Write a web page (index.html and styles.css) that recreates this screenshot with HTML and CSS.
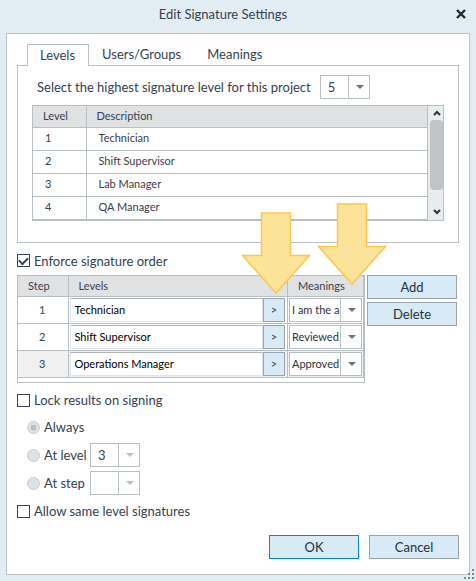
FILE: index.html
```html
<!DOCTYPE html>
<html lang="en">
<head>
  <meta charset="UTF-8">
  <meta name="viewport" content="width=device-width, initial-scale=1.0">
  <title>Edit Signature Settings</title>
  <link rel="stylesheet" href="styles.css">
</head>
<body>
  <header class="titlebar">
    <h1>Edit Signature Settings</h1>
    <button class="close" type="button" aria-label="Close">
      <svg width="10" height="10" viewBox="0 0 10 10"><path d="M1 1L9 9M9 1L1 9" stroke="#1f2937" stroke-width="2.4"/></svg>
    </button>
  </header>

  <form class="panel">
    <div class="tabs" role="tablist">
      <button class="tab active" type="button" role="tab" aria-selected="true">Levels</button>
      <button class="tab" type="button" role="tab" aria-selected="false">Users/Groups</button>
      <button class="tab" type="button" role="tab" aria-selected="false">Meanings</button>
    </div>

    <section class="tab-page">
      <div class="highest">
        <label for="highest">Select the highest signature level for this project</label>
        <span class="select"><select id="highest"><option>5</option></select></span>
      </div>
      <div class="grid">
        <table class="levels">
          <thead>
            <tr><th class="col-level">Level</th><th>Description</th></tr>
          </thead>
          <tbody>
            <tr><td>1</td><td>Technician</td></tr>
            <tr><td>2</td><td>Shift Supervisor</td></tr>
            <tr><td>3</td><td>Lab Manager</td></tr>
            <tr><td>4</td><td>QA Manager</td></tr>
          </tbody>
        </table>
        <div class="scrollbar">
          <svg width="8" height="6" viewBox="0 0 8 6"><path d="M1 5L4 2L7 5" fill="none" stroke="#333" stroke-width="2"/></svg>
          <div class="thumb"></div>
          <svg width="8" height="6" viewBox="0 0 8 6"><path d="M1 1L4 4L7 1" fill="none" stroke="#333" stroke-width="2"/></svg>
        </div>
      </div>
    </section>

    <label class="check enforce"><input type="checkbox" checked>Enforce signature order</label>

    <div class="order">
      <div class="steps-box">
        <table class="steps">
          <thead>
            <tr>
              <th class="col-step">Step</th>
              <th class="col-levels">Levels
                <svg class="arrow arrow-levels" width="70" height="83" viewBox="0 0 70 83"><path d="M20.500 1H49.500V43.500H68.500L35 81L1.500 43.500H20.500Z" fill="#fce39a" stroke="#fdc74f" stroke-width="1.500"/></svg>
              </th>
              <th class="col-meanings">Meanings
                <svg class="arrow arrow-meanings" width="70" height="83" viewBox="0 0 70 83"><path d="M20.500 1H49.500V43.500H68.500L35 81L1.500 43.500H20.500Z" fill="#fce39a" stroke="#fdc74f" stroke-width="1.500"/></svg>
              </th>
            </tr>
          </thead>
          <tbody>
            <tr>
              <td>1</td>
              <td><div class="picker"><input type="text" value="Technician" aria-label="Level for step 1"><button type="button">&gt;</button></div></td>
              <td><span class="select"><select aria-label="Meaning for step 1"><option>I am the author</option></select></span></td>
            </tr>
            <tr>
              <td>2</td>
              <td><div class="picker"><input type="text" value="Shift Supervisor" aria-label="Level for step 2"><button type="button">&gt;</button></div></td>
              <td><span class="select"><select aria-label="Meaning for step 2"><option>Reviewed</option></select></span></td>
            </tr>
            <tr class="current">
              <td>3</td>
              <td><div class="picker"><input type="text" value="Operations Manager" aria-label="Level for step 3"><button type="button">&gt;</button></div></td>
              <td><span class="select"><select aria-label="Meaning for step 3"><option>Approved</option></select></span></td>
            </tr>
          </tbody>
        </table>
      </div>
      <div class="order-buttons">
        <button class="btn" type="button">Add</button>
        <button class="btn" type="button">Delete</button>
      </div>
    </div>

    <label class="check lock"><input type="checkbox">Lock results on signing</label>

    <div class="lock-options">
      <div class="option">
        <label class="radio"><input type="radio" name="lock" checked disabled>Always</label>
      </div>
      <div class="option">
        <label class="radio"><input type="radio" name="lock" disabled>At level</label>
        <span class="select disabled"><select aria-label="Level" disabled><option>3</option></select></span>
      </div>
      <div class="option">
        <label class="radio"><input type="radio" name="lock" disabled>At step</label>
        <span class="select disabled"><select aria-label="Step" disabled><option></option></select></span>
      </div>
    </div>

    <label class="check"><input type="checkbox">Allow same level signatures</label>

    <footer class="actions">
      <button class="btn primary" type="button">OK</button>
      <button class="btn" type="button">Cancel</button>
    </footer>
  </form>

  <svg class="grip" width="10" height="10" viewBox="0 0 10 10" fill="#7c8494"><path d="M8 0h2v2h-2zM4 4h2v2h-2zM8 4h2v2h-2zM0 8h2v2h-2zM4 8h2v2h-2zM8 8h2v2h-2z"/></svg>
</body>
</html>
```
FILE: styles.css
```css
* { box-sizing: border-box; }
body {
  margin: 0;
  min-height: 100vh;
  padding: 0 6px 6px;
  display: flex;
  flex-direction: column;
  position: relative;
  background: #e2edf3;
  color: #364152;
  font-family: Lato, Carlito, sans-serif;
  font-size: 13px;
  line-height: 16px;
}
button, input, select {
  font: inherit;
  color: inherit;
  margin: 0;
  border-radius: 0;
}

/* title bar */
.titlebar {
  height: 33px;
  padding-bottom: 6px;
  display: grid;
  grid-template-columns: 20px 1fr 20px;
  align-items: center;
}
.titlebar h1 {
  grid-column: 2;
  margin: 0;
  padding-right: 30px;
  font-size: 13px;
  font-weight: normal;
  text-align: center;
}
.close {
  padding: 0 0 0 2px;
  border: none;
  background: none;
  line-height: 0;
}

.panel {
  flex: 1;
  display: flex;
  flex-direction: column;
  padding: 10px 10px 15px;
  border: 1px solid #bdc4c8;
  background: #fff;
}

/* tabs */
.tabs {
  display: flex;
  padding-left: 10px;
}
.tab {
  height: 21px;
  padding: 0 13px 2px;
  border: none;
  background: none;
}
.tab.active {
  height: 22px;
  margin-bottom: -1px;
  padding: 0 13px 2px 12px;
  border: 1px solid #b8c0c4;
  border-bottom: none;
  background: #fff;
  position: relative;
}
.tab-page {
  border: 1px solid #b8c0c4;
  padding: 9px 14px 21px;
}
.highest {
  display: flex;
  align-items: center;
  gap: 9px;
  padding-left: 5px;
  margin-bottom: 6px;
}

/* drop-downs */
.select {
  display: block;
  width: 50px;
  position: relative;
}
.select select {
  display: block;
  width: 100%;
  height: 24px;
  padding: 0 22px 0 7px;
  border: 1px solid #b8c0c4;
  appearance: none;
  background: linear-gradient(#b8c0c4, #b8c0c4) right 20px top / 1px 100% no-repeat #fff;
  opacity: 1;
}
.select::after {
  content: "";
  position: absolute;
  right: 6px;
  top: 10px;
  border: 4px solid transparent;
  border-top-color: #6d767d;
  border-bottom: none;
  pointer-events: none;
}
.select.disabled::after { border-top-color: #b8c0c4; }

/* tables */
table {
  border-collapse: collapse;
  table-layout: fixed;
  width: 100%;
  font-size: 11px;
}
th {
  font-weight: normal;
  text-align: left;
  background: #e0e1e3;
}
td { color: #3c4046; }
.grid {
  display: flex;
  border: 1px solid #b8c0c4;
}
.levels { flex: 1; }
.levels th, .levels td {
  height: 23px;
  padding: 0 12px 1px;
  border-right: 1px solid #b8c0c4;
  border-bottom: 1px solid #b8c0c4;
}
.levels th {
  height: 21px;
  padding: 0 10px;
}
.levels .col-level { width: 53px; }
.scrollbar {
  width: 15px;
  padding: 4px 0 5px 2px;
  display: flex;
  flex-direction: column;
  align-items: center;
  gap: 4px;
  background: #e7ecef;
}
.thumb {
  width: 13px;
  height: 70px;
  margin-bottom: auto;
  border-radius: 4px;
  background: #c0c4c7;
}

/* check boxes and radios */
.check, .radio {
  display: flex;
  align-items: center;
  gap: 4px;
}
.check input, .radio input {
  appearance: none;
  width: 13px;
  height: 13px;
  border: 1px solid #364152;
  background: #fff;
}
.check input:checked {
  display: grid;
  place-items: center;
}
.check input:checked::after {
  content: "";
  width: 7px;
  height: 4px;
  margin-top: -2px;
  border: solid #364152;
  border-width: 0 0 2px 2px;
  transform: rotate(-45deg);
}
.radio input {
  border-color: #c8cccf;
  border-radius: 50%;
  background: #e0e1e3;
}
.radio input:checked {
  background: radial-gradient(circle, #b8c0c4 3px, #e0e1e3 3px);
}
.enforce {
  margin: 10px 0 6px;
}
.lock { margin-top: 9px; }

/* signature order */
.order {
  display: flex;
  align-items: flex-start;
  gap: 2px;
  padding-right: 2px;
}
.steps-box {
  flex: 1;
  min-width: 0;
  padding-bottom: 4px;
  border: 1px solid #b8c0c4;
}
.steps th, .steps td {
  height: 27px;
  padding: 0 2px 1px 1px;
  border-right: 1px solid #b8c0c4;
  border-bottom: 1px solid #b8c0c4;
  white-space: nowrap;
}
.steps th {
  height: 21px;
  padding: 0 10px;
  position: relative;
}
.steps td:first-child { text-align: center; }
.steps .col-step { width: 50px; }
.steps .col-meanings { width: 76px; }
.steps .current { background: #f0f0f0; }
.steps .select { width: 73px; }
.steps select {
  padding: 0 21px 0 2px;
  color: #2b323c;
}
.picker {
  display: flex;
}
.picker input {
  flex: 1;
  min-width: 0;
  height: 24px;
  padding: 0 4px;
  border: 1px solid #dfe5ea;
  border-top-color: #b0b4b8;
  color: #000;
}
.picker button {
  width: 22px;
  height: 24px;
  padding: 0;
  border: 1px solid #9aa4ae;
  background: #d8eaf6;
}
.arrow {
  position: absolute;
  z-index: 1;
  top: -64px;
}
.arrow-levels { right: -24px; }
.arrow-meanings {
  top: -73px;
  right: -24px;
}

/* buttons */
.btn {
  width: 90px;
  height: 24px;
  padding: 0;
  border: 1px solid #9aa4ae;
  background: #d8eaf6;
  color: #27303c;
}
.btn.primary { border-color: #0a84d0; }
.order-buttons {
  display: flex;
  flex-direction: column;
  gap: 3px;
}

.lock-options {
  display: flex;
  flex-direction: column;
  gap: 4px;
  padding: 7px 0 8px 10px;
}
.option {
  display: grid;
  grid-template-columns: 60px auto;
  justify-content: start;
  gap: 3px;
  min-height: 24px;
}

.actions {
  display: flex;
  justify-content: flex-end;
  gap: 10px;
  margin-top: auto;
}
.grip {
  position: absolute;
  right: 2px;
  bottom: 2px;
}
```
